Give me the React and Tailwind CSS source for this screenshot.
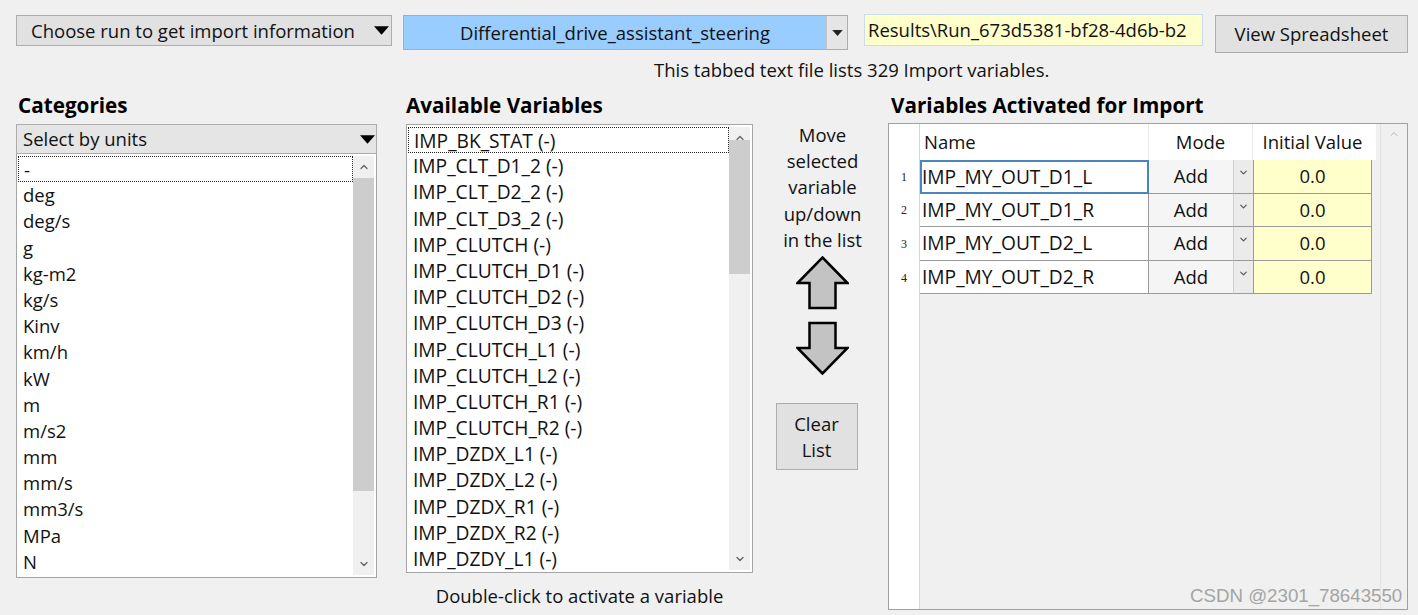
import React from 'react'
import { ChevronUp, ChevronDown } from 'lucide-react'

const units = ['-', 'deg', 'deg/s', 'g', 'kg-m2', 'kg/s', 'Kinv', 'km/h', 'kW', 'm', 'm/s2', 'mm', 'mm/s', 'mm3/s', 'MPa', 'N']

const vars = [
  'IMP_BK_STAT (-)',
  'IMP_CLT_D1_2 (-)',
  'IMP_CLT_D2_2 (-)',
  'IMP_CLT_D3_2 (-)',
  'IMP_CLUTCH (-)',
  'IMP_CLUTCH_D1 (-)',
  'IMP_CLUTCH_D2 (-)',
  'IMP_CLUTCH_D3 (-)',
  'IMP_CLUTCH_L1 (-)',
  'IMP_CLUTCH_L2 (-)',
  'IMP_CLUTCH_R1 (-)',
  'IMP_CLUTCH_R2 (-)',
  'IMP_DZDX_L1 (-)',
  'IMP_DZDX_L2 (-)',
  'IMP_DZDX_R1 (-)',
  'IMP_DZDX_R2 (-)',
  'IMP_DZDY_L1 (-)',
]

const activated = ['IMP_MY_OUT_D1_L', 'IMP_MY_OUT_D1_R', 'IMP_MY_OUT_D2_L', 'IMP_MY_OUT_D2_R']

function DownTriangle({ w = 14, h = 8, color = '#000' }) {
  return (
    <svg width={w} height={h} viewBox="0 0 14 8">
      <polygon points="0,0 14,0 7,8" fill={color} />
    </svg>
  )
}

function BigArrow({ down }) {
  return (
    <svg width="53" height="54" viewBox="0 0 53 54" className={down ? 'rotate-180' : ''}>
      <polygon
        points="26.5,1.5 51.5,27 39.5,27 39.5,52 13.5,52 13.5,27 1.5,27"
        fill="#c3c3c3"
        stroke="#000"
        strokeWidth="2.5"
        strokeLinejoin="miter"
      />
    </svg>
  )
}

function ListBox({ items, height, thumbTop, thumbHeight, width, textClass }) {
  return (
    <div className={`flex border border-[#a5a5a5] bg-white ${height} ${width}`}>
      <div className="flex-1 pt-[2px] pl-[1px] overflow-hidden">
        {items.map((it, i) => (
          <div
            key={it}
            className={`h-[26.2px] leading-[26px] whitespace-nowrap ${textClass} ${
              i === 0 ? 'border border-dotted border-[#222] leading-[24px]' : ''
            }`}
          >
            {it}
          </div>
        ))}
      </div>
      <div className="w-[21px] bg-[#f0f0f0] flex flex-col items-center mr-[2px] my-[2px]">
        <div className="h-[22px] flex items-center justify-center text-[#606060]">
          <ChevronUp size={12} strokeWidth={2.5} />
        </div>
        <div className="w-full flex-1 relative">
          <div className={`w-full bg-[#cdcdcd] ${thumbTop} ${thumbHeight}`} />
        </div>
        <div className="h-[22px] flex items-center justify-center text-[#606060]">
          <ChevronDown size={12} strokeWidth={2.5} />
        </div>
      </div>
    </div>
  )
}

export default function App() {
  return (
    <div className="w-[1418px] h-[615px] bg-[#f0f0f0] overflow-hidden relative font-['Open_Sans',sans-serif] text-[18.5px] text-[#111]">
      {/* top row */}
      <div className="flex items-start pt-[14px] pl-[16px]">
        <div className="mt-[1px] w-[376px] h-[31px] border border-[#adadad] bg-[#e1e1e1] flex items-center justify-between pl-[14px] pr-[2px]">
          <span className="leading-[24px]">Choose run to get import information</span>
          <DownTriangle w={15} h={9} />
        </div>
        <div className="ml-[11px] mt-[1px] w-[445px] h-[35px] border border-[#adadad] flex">
          <div className="flex-1 bg-[#99ccff] flex items-center justify-center leading-[24px]">
            Differential_drive_assistant_steering
          </div>
          <div className="w-[21px] bg-[#e5e5e5] border-l border-[#c8c8c8] flex items-center justify-center">
            <DownTriangle w={11} h={6} color="#222" />
          </div>
        </div>
        <div className="ml-[16px] w-[339px] h-[32px] border border-[#c9dcea] bg-[#ffffcc] flex items-center pl-[3px] overflow-hidden whitespace-nowrap leading-[24px]">
          Results\Run_673d5381-bf28-4d6b-b2
        </div>
        <div className="ml-[12px] mt-[1px] w-[193px] h-[38px] border border-[#adadad] bg-[#e1e1e1] flex items-center justify-center leading-[24px]">
          View Spreadsheet
        </div>
      </div>

      <div className="mt-[5px] pl-[654px] leading-[24px]">This tabbed text file lists 329 Import variables.</div>

      {/* main row */}
      <div className="mt-[10px] flex items-start pl-[16px]">
        {/* categories */}
        <div className="w-[361px] flex flex-col">
          <div className="h-[32px] pl-[2px] font-bold text-[20.7px] leading-[26px] text-black">Categories</div>
          <div className="h-[30px] border border-[#acacac] bg-[#e5e5e5] flex items-center justify-between pl-[6px] pr-[1px]">
            <span className="leading-[24px]">Select by units</span>
            <DownTriangle w={15} h={9} />
          </div>
          <ListBox
            items={units}
            height="h-[424px] border-t-0"
            width="w-[361px]"
            thumbTop="mt-0"
            thumbHeight="h-[313px]"
            textClass="pl-[5px]"
          />
        </div>

        {/* available variables */}
        <div className="ml-[29px] w-[347px] flex flex-col">
          <div className="h-[32px] font-bold text-[20.7px] leading-[26px] text-black">Available Variables</div>
          <ListBox
            items={vars}
            height="h-[449px]"
            width="w-[347px]"
            thumbTop="mt-[-9px]"
            thumbHeight="h-[134px]"
            textClass="pl-[5px] text-[19.2px]"
          />
          <div className="mt-[11px] text-center leading-[24px]">Double-click to activate a variable</div>
        </div>

        {/* move column */}
        <div className="w-[135px] flex flex-col items-center pt-[30px] pl-[4px]">
          <div className="text-center leading-[26.2px]">
            Move
            <br />
            selected
            <br />
            variable
            <br />
            up/down
            <br />
            in the list
          </div>
          <div className="mt-[3px]">
            <BigArrow />
          </div>
          <div className="mt-[11px]">
            <BigArrow down />
          </div>
          <div className="mt-[28px] mr-[12px] w-[82px] h-[67px] border border-[#adadad] bg-[#e1e1e1] flex flex-col items-center justify-center leading-[26px]">
            <span>Clear</span>
            <span>List</span>
          </div>
        </div>

        {/* activated */}
        <div className="w-[520px] flex flex-col">
          <div className="h-[31px] pl-[3px] font-bold text-[20.7px] leading-[26px] text-black">Variables Activated for Import</div>
          <div className="h-[487px] border border-[#a0a0a0] flex">
            <div className="w-[31px] bg-white flex flex-col border-r border-[#d8d8d8]">
              <div className="h-[36px]" />
              {activated.map((_, i) => (
                <div
                  key={i}
                  className="h-[33.6px] flex items-center justify-center font-['Liberation_Serif',serif] text-[12px] text-[#222]"
                >
                  {i + 1}
                </div>
              ))}
            </div>
            <div className="flex-1 flex flex-col">
              <div className="h-[36px] flex">
                <div className="w-[229px] bg-white border-r border-[#ececec] pl-[4px] flex items-center leading-[24px]">Name</div>
                <div className="w-[104px] bg-white border-r border-[#ececec] flex items-center justify-center leading-[24px]">Mode</div>
                <div className="w-[119px] bg-white flex items-center justify-center leading-[24px]">Initial Value</div>
                <div className="w-[4px] bg-white" />
              </div>
              {activated.map((name, i) => (
                <div key={name} className="h-[33.6px] flex">
                  <div
                    className={`w-[229px] bg-white flex items-center leading-[24px] whitespace-nowrap text-[19.2px] ${
                      i === 0
                        ? 'border-2 border-[#4a86bd] pl-[0px]'
                        : 'border-r border-b border-[#9a9a9a] pl-[2px]'
                    }`}
                  >
                    {name}
                  </div>
                  <div className="w-[84px] bg-[#f5f5f5] border-b border-[#9a9a9a] flex items-center justify-center leading-[24px]">
                    Add
                  </div>
                  <div className="w-[20px] bg-[#ebebeb] border-b border-l border-[#d0d0d0] border-b-[#9a9a9a] flex items-start justify-center pt-[7px] text-[#555]">
                    <ChevronDown size={11} strokeWidth={2.5} />
                  </div>
                  <div className="w-[119px] bg-[#ffffcc] border-l border-r border-b border-[#9a9a9a] flex items-center justify-center leading-[24px]">
                    0.0
                  </div>
                </div>
              ))}
            </div>
            <div className="w-[27px] border-l border-[#e2e2e2] flex flex-col items-center pt-[4px] text-[#b8b8b8]">
              <ChevronUp size={12} strokeWidth={2} />
            </div>
          </div>
        </div>
      </div>

      <div className="absolute left-[1190px] top-[584px] leading-[24px] font-['Liberation_Sans',sans-serif] text-[18.7px] text-[#a4a4a4]">
        CSDN @2301_78643550
      </div>
    </div>
  )
}
